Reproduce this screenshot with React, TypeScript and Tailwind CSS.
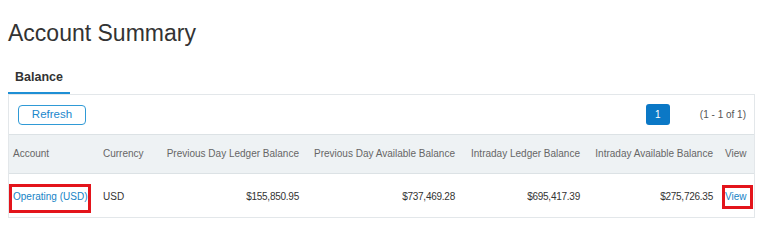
const columns = [
  { label: "Account", align: "left" },
  { label: "Currency", align: "left" },
  { label: "Previous Day Ledger Balance", align: "right" },
  { label: "Previous Day Available Balance", align: "right" },
  { label: "Intraday Ledger Balance", align: "right" },
  { label: "Intraday Available Balance", align: "right" },
  { label: "View", align: "left" },
];

const account = {
  name: "Operating (USD)",
  currency: "USD",
  balances: ["$155,850.95", "$737,469.28", "$695,417.39", "$275,726.35"],
};

const cellPad = [
  "pl-[4px]",
  "pl-[8px]",
  "pr-[8px] text-right",
  "pr-[8px] text-right",
  "pr-[8px] text-right",
  "pr-[8px] text-right",
  "pl-[4px]",
];

const grid =
  "grid grid-cols-[86px_64px_148px_156px_125px_133px_33px] items-center";

export default function App() {
  return (
    <div className="min-h-screen bg-white font-['Liberation_Sans',Arial,sans-serif] text-[#333]">
      <h1 className="pl-2 pt-[19px] text-[23px] leading-[28px] font-normal text-[#333]">
        Account Summary
      </h1>

      <div className="mt-[23px] flex pl-2">
        <div className="border-b-2 border-[#1e8fd5] px-[7px] pb-[7px] text-[12.5px] font-bold leading-[15px] text-[#333]">
          Balance
        </div>
      </div>

      <div className="ml-2 w-[747px] border border-[#e3e7ea]">
        <div className="flex h-[39px] items-center pl-[9px] pr-[8px]">
          <button className="flex h-[20px] w-[68px] items-center justify-center rounded-[4px] border border-[#2f9ad6] text-[11.5px] leading-none text-[#1b87cc]">
            Refresh
          </button>
          <div className="ml-auto flex items-center gap-[30px]">
            <button className="flex h-[21px] w-[24px] items-center justify-center rounded-[3px] bg-[#0b78c6] text-[10px] leading-none text-white">
              1
            </button>
            <span className="text-[10px] leading-none text-[#555]">
              (1 - 1 of 1)
            </span>
          </div>
        </div>

        <div
          className={`${grid} h-[40px] border-y border-[#dce2e5] bg-[#eef2f4] text-[10px] leading-[12px] text-[#666]`}
        >
          {columns.map((col, i) => (
            <div key={col.label} className={`whitespace-nowrap ${cellPad[i]}`}>
              {col.label}
            </div>
          ))}
        </div>

        <div className={`${grid} h-[43px] pt-[2px] text-[10px] leading-[12px]`}>
          <div className={cellPad[0]}>
            <span className="relative inline-block whitespace-nowrap text-[#1683c6]">
              {account.name}
              <span className="absolute -top-[7px] -bottom-[10px] -left-[4px] -right-[4px] border-[3px] border-[#e3141b]" />
            </span>
          </div>
          <div className={`${cellPad[1]} text-[#333]`}>{account.currency}</div>
          {account.balances.map((b, i) => (
            <div
              key={b}
              className={`${cellPad[i + 2]} tracking-[-0.25px] text-[#333]`}
            >
              {b}
            </div>
          ))}
          <div className={cellPad[6]}>
            <span className="relative inline-block text-[#1683c6]">
              View
              <span className="absolute -top-[6px] -bottom-[6px] -left-[3px] -right-[6px] border-[3px] border-[#e3141b]" />
            </span>
          </div>
        </div>
      </div>
    </div>
  );
}
